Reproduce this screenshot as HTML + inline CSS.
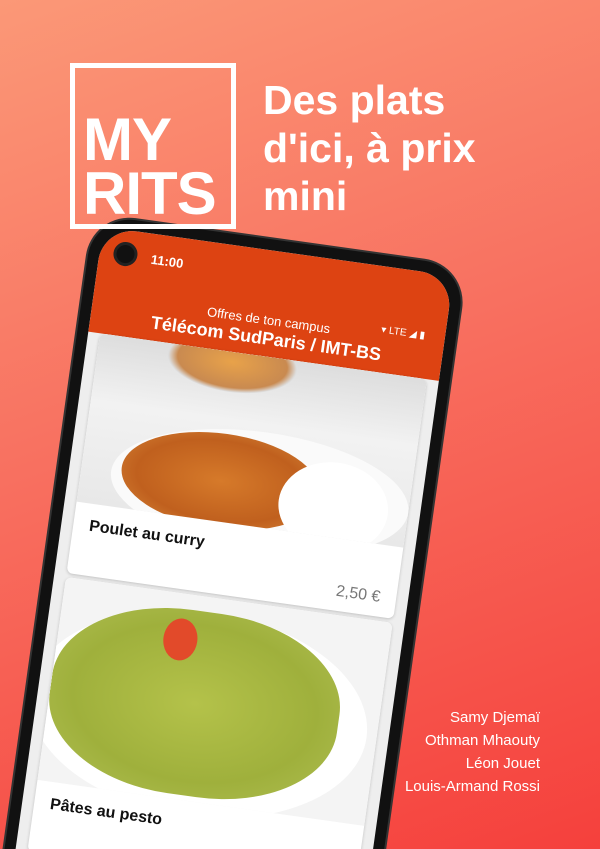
<!DOCTYPE html>
<html style="width:600px;height:849px;overflow:hidden"><head><meta charset="utf-8"><style>
*{margin:0;padding:0;box-sizing:border-box}
body{width:600px;height:849px;overflow:hidden;position:relative;font-family:"Liberation Sans",sans-serif;background:linear-gradient(160deg,#fb9877 0%,#f87060 45%,#f5403c 100%)}
.clip{position:absolute;left:0;top:0;width:600px;height:849px;overflow:hidden}
.logo{position:absolute;left:70px;top:63px;width:166px;height:166px;border:5px solid #fff;z-index:5}
.logo div{position:absolute;left:8px;color:#fff;font-weight:bold;font-size:60px;letter-spacing:-1px;line-height:1}
.head{position:absolute;left:263px;top:76px;color:#fff;font-weight:bold;font-size:41px;line-height:48px}
.names{position:absolute;right:60px;top:706px;color:#fff;font-size:15px;line-height:23px;text-align:right}
.phone{position:absolute;left:92px;top:212px;width:380px;height:700px;background:#111;border-radius:44px;transform:rotate(8deg);transform-origin:0 0;border:2px solid #333}
.screen{position:absolute;left:11px;top:11px;right:11px;bottom:11px;border-radius:34px;overflow:hidden;background:#eee}
.bar{height:106px;background:#dd4312;color:#fff;position:relative}
.cam{position:absolute;left:14px;top:12px;width:24px;height:24px;border-radius:50%;background:#111;border:3px solid #222}
.time{position:absolute;left:52px;top:18px;font-size:13px;font-weight:bold}
.st{position:absolute;right:20px;top:58px;font-size:10px}
.t1{position:absolute;left:0;right:0;top:62px;text-align:center;font-size:13px}
.t2{position:absolute;left:0;right:0;top:78px;text-align:center;font-size:18px;font-weight:bold}
.card{margin:-8px 12px 12px;background:#fff;border-radius:6px;overflow:hidden;position:relative;box-shadow:0 1px 3px rgba(0,0,0,.2)}
.img{position:relative;overflow:hidden}
.info{height:72px;position:relative}
.info b{position:absolute;left:16px;top:14px;font-size:16px;color:#111}
.info span{position:absolute;right:16px;top:44px;font-size:16px;color:#777}
</style></head><body><div class="clip">
<div class="phone"><div class="screen">
<div class="bar"><div class="cam"></div><div class="time">11:00</div><div class="st">▾ LTE ◢ ▮</div>
<div class="t1">Offres de ton campus</div><div class="t2">Télécom SudParis / IMT-BS</div></div>
<div class="card" style="margin-top:0"><div class="img" style="height:170px;background:linear-gradient(#ddd,#f2f2f2 40%,#e8e8e8)">
<div style="position:absolute;left:70px;top:-20px;width:130px;height:60px;border-radius:50%;background:radial-gradient(#e8a24a,#c98a50 60%,#ddd 70%)"></div>
<div style="position:absolute;left:30px;top:75px;width:300px;height:120px;border-radius:50%;background:#fafafa"></div>
<div style="position:absolute;left:40px;top:82px;width:200px;height:95px;border-radius:50%;background:radial-gradient(#d67a2a,#c0601e 60%,#d88a3a)"></div>
<div style="position:absolute;left:200px;top:95px;width:110px;height:90px;border-radius:50%;background:#fff"></div>
</div><div class="info"><b>Poulet au curry</b><span>2,50 €</span></div></div>
<div class="card"><div class="img" style="height:205px;background:#f4f4f4">
<div style="position:absolute;left:-20px;top:15px;width:340px;height:205px;border-radius:50%;background:#fff"></div>
<div style="position:absolute;left:0;top:15px;width:290px;height:185px;border-radius:45%;background:radial-gradient(#b4c24a,#9fb03c 60%,#a8b848 80%,rgba(255,255,255,0) 82%)"></div>
<div style="position:absolute;left:105px;top:25px;width:34px;height:42px;border-radius:50%;background:#e24a2a"></div>
</div><div class="info"><b>Pâtes au pesto</b><span>3,00 €</span></div></div>
<div class="card"><div class="img" style="height:200px;background:linear-gradient(#e8b070,#c07a3a)"></div></div>
</div></div>
<div class="logo"><div style="top:42px">MY</div><div style="top:96px">RITS</div></div>
<div class="head">Des plats<br>d'ici, à prix<br>mini</div>
<div class="names">Samy Djemaï<br>Othman Mhaouty<br>Léon Jouet<br>Louis-Armand Rossi</div>
</div></body></html>
